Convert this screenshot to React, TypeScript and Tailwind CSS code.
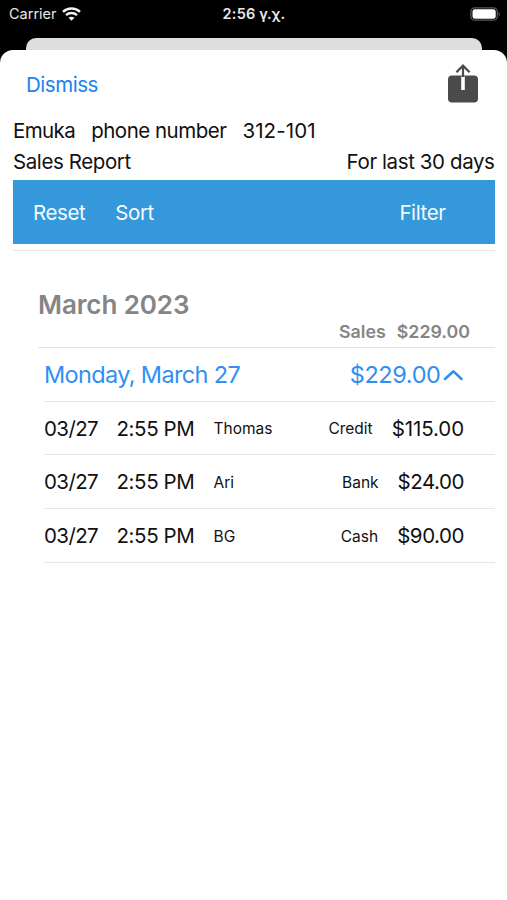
import React from 'react';

interface Sale {
  date: string;
  time: string;
  customer: string;
  method: string;
  amount: string;
}

const sales: Sale[] = [
  { date: '03/27', time: '2:55 PM', customer: 'Thomas', method: 'Credit', amount: '$115.00' },
  { date: '03/27', time: '2:55 PM', customer: 'Ari', method: 'Bank', amount: '$24.00' },
  { date: '03/27', time: '2:55 PM', customer: 'BG', method: 'Cash', amount: '$90.00' },
];

const WifiIcon = () => (
  <svg className="ml-[5px]" width="19" height="15" viewBox="0 0 19 15" fill="none">
    <path d="M1 4.900C5.700 .4 13.300 .4 18 4.900" stroke="#f2f2f2" strokeWidth="2.500" />
    <path d="M4 8.200c3.100-2.900 7.900-2.900 11 0" stroke="#f2f2f2" strokeWidth="2.400" />
    <path d="M6.500 10.800c1.700-1.500 4.300-1.500 6 0L9.500 13.800z" fill="#f2f2f2" />
  </svg>
);

const BatteryIcon = () => (
  <svg width="31" height="14" viewBox="0 0 31 14" fill="none">
    <rect x=".9" y=".8" width="26.400" height="12.400" rx="3.800" stroke="#5a5a5a" strokeWidth="1.300" />
    <rect x="2.500" y="2.300" width="23.200" height="9.400" rx="2.300" fill="#fff" />
    <path d="M28.700 4.900c1.600.6 1.600 3.600 0 4.200z" fill="#5a5a5a" />
  </svg>
);

const ShareIcon = () => (
  <svg width="32" height="40" viewBox="0 0 32 40" fill="none">
    <rect x="1" y="11.500" width="30" height="27" rx="4" fill="#4a4a4a" />
    <path d="M16 12.500V26" stroke="#fff" strokeWidth="3.600" />
    <path d="M16 13V2M9.400 8.200L16 1.600l6.600 6.600" stroke="#4a4a4a" strokeWidth="2.200" />
  </svg>
);

const ChevronUp = () => (
  <svg className="ml-[2px]" width="20" height="12" viewBox="0 0 20 12" fill="none">
    <path d="M2 10L10.500 2.300l8 7.700" stroke="#2f8cf0" strokeWidth="2.500" strokeLinecap="round" strokeLinejoin="round" />
  </svg>
);

const StatusBar = () => (
  <div className="grid h-[38px] grid-cols-3 items-start pl-[9px] pr-[6px] text-[#e8e8e8]">
    <div className="flex h-[27px] items-center pt-[1px] text-[14.500px] leading-none">
      Carrier
      <WifiIcon />
    </div>
    <div className="flex h-[27px] items-center justify-center pr-[2px] pt-[1px] text-[14.500px] font-semibold tracking-[0.2px] leading-none">
      2:56 γ.χ.
    </div>
    <div className="flex h-[27px] items-center justify-end">
      <BatteryIcon />
    </div>
  </div>
);

const SaleRow: React.FC<{ sale: Sale }> = ({ sale }) => (
  <div className="ml-[31px] flex h-[53.8px] items-center border-b border-[#e6e6e6] pr-[30.500px] pt-[2px] text-[20.500px] text-[#111]">
    <span className="w-[72.500px] tracking-[-0.6px]">{sale.date}</span>
    <span className="w-[97px] tracking-[-0.4px]">{sale.time}</span>
    <span className="text-[15.500px]">{sale.customer}</span>
    <span className="ml-auto text-[15.500px]">{sale.method}</span>
    <span className={`ml-[19px] ${sale.amount.length > 6 ? 'tracking-[-0.1px]' : 'tracking-[-0.45px]'}`}>
      {sale.amount}
    </span>
  </div>
);

export default function App() {
  return (
    <div className="flex h-screen flex-col overflow-hidden bg-black font-['Inter','Liberation_Sans',sans-serif] whitespace-nowrap">
      <StatusBar />
      <div className="mx-[25.500px] h-3 shrink-0 rounded-t-[10px] bg-[#dedede]" />

      <main className="flex-1 rounded-t-[13px] bg-white pl-[13px] pr-[12.500px]">
        <header className="flex h-[66px] items-center justify-between pl-[13px] pr-4 pt-[2px]">
          <button className="pt-[2px] text-[20.500px] tracking-[-0.45px] text-[#1c82f2]">Dismiss</button>
          <button>
            <ShareIcon />
          </button>
        </header>

        <div className="flex h-[31px] items-center gap-[16px] text-[20.500px] text-[#111]">
          <span className="tracking-[-0.6px]">Emuka</span>
          <span className="tracking-[-0.5px]">phone number</span>
          <span className="tracking-[0.1px]">312-101</span>
        </div>
        <div className="flex h-[31px] items-center justify-between text-[20.500px] tracking-[-0.4px] text-[#111]">
          <span>Sales Report</span>
          <span>For last 30 days</span>
        </div>

        <nav className="mt-[2px] flex h-16 items-center bg-[#3498db] pl-5 pr-[49px] pt-[2px] text-[20.500px] tracking-[-0.4px] text-[#f4faff]">
          <button>Reset</button>
          <button className="ml-[30px]">Sort</button>
          <button className="ml-auto">Filter</button>
        </nav>
        <div className="mt-[6px] border-t border-[#e6e6e6]" />

        <section>
          <div className="ml-[25px] flex h-[97px] flex-col justify-end border-b border-[#e2e2e2] pb-[4px] pr-[24.500px] font-semibold text-[#858585]">
            <h2 className="text-[26px] leading-[30px] tracking-[-0.1px]">March 2023</h2>
            <div className="mt-[1px] flex justify-end gap-[11px] text-[17.800px] leading-[22px]">
              <span>Sales</span>
              <span>$229.00</span>
            </div>
          </div>
          <div className="ml-[31px] flex h-[53.500px] items-center border-b border-[#e6e6e6] pr-[32px] pt-[1px] text-[23.500px] text-[#3090f2]">
            <span className="tracking-[-0.65px]">Monday, March 27</span>
            <span className="ml-auto tracking-[-0.4px]">$229.00</span>
            <ChevronUp />
          </div>
          {sales.map((sale, index) => (
            <SaleRow key={index} sale={sale} />
          ))}
        </section>
      </main>
    </div>
  );
}
